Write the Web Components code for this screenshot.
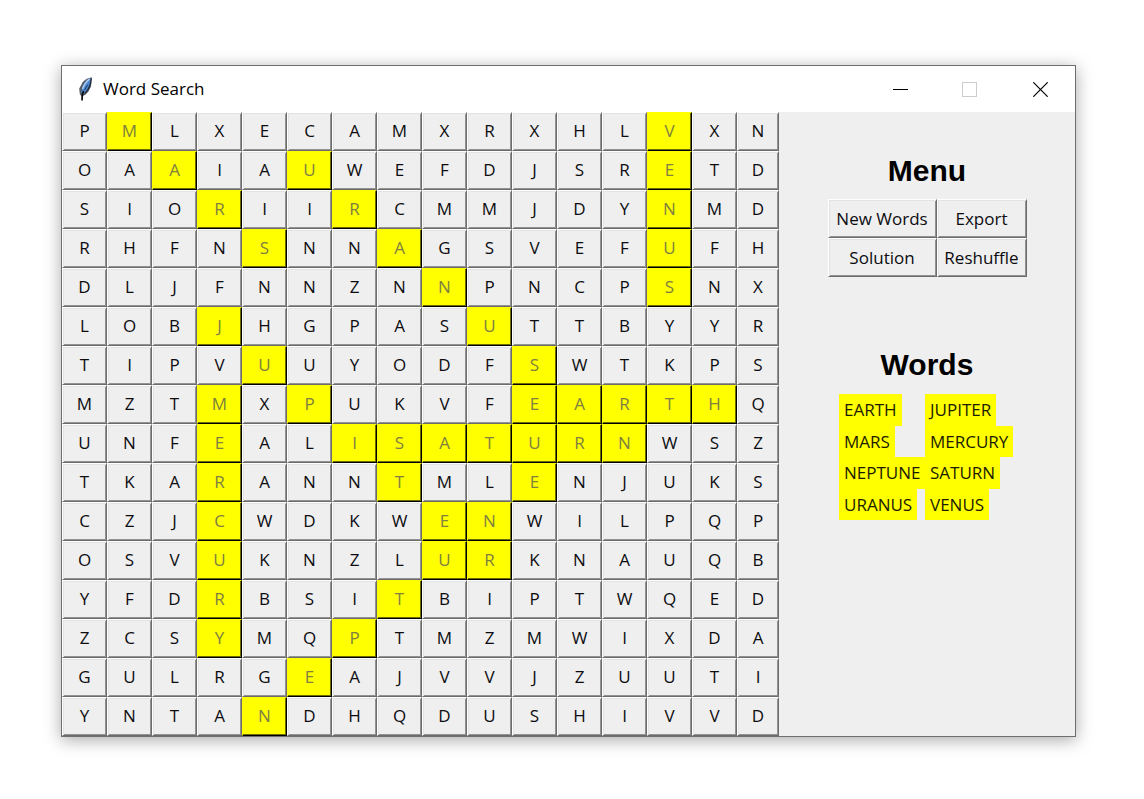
<!DOCTYPE html>
<html lang="en">
<head>
<meta charset="utf-8">
<title>Word Search</title>
<style>
  html { background: #fff; }
  body { margin: 0; padding: 65px 68px 62px 61px; font-family: "Open Sans", "Noto Sans", sans-serif; font-size: 17px; color: #000; }
</style>
</head>
<body>
<app-window heading="Word Search">
  <letter-board></letter-board>
  <side-panel>
    <menu-section></menu-section>
    <word-list></word-list>
  </side-panel>
</app-window>

<script>
const define = (name, html, setup) => {
  customElements.define(name, class extends HTMLElement {
    constructor() {
      super();
      this.attachShadow({ mode: 'open' }).innerHTML = html;
    }
    connectedCallback() { if (setup) setup(this, this.shadowRoot); }
  });
};

/* Raised Tk-style button face, shared by the board and the menu */
const bevel = `
  button { box-sizing: border-box; width: 100%; height: 39px; margin: 0; padding: 0; display: block;
    font: inherit; line-height: 35px; text-align: center; color: #0c0c10; background: #efefef;
    border: 1px solid; border-color: #fff #6c6c6c #6c6c6c #fff;
    box-shadow: inset 1px 1px #e3e3e3, inset -1px -1px #929292; border-radius: 0; white-space: nowrap; }`;

define('app-window', `
  <style>
    :host { display: block; border: 1px solid #6e6e6e; background: #efefef; box-shadow: 0 3px 16px rgba(0,0,0,.34); }
    header { display: flex; align-items: center; height: 46px; background: #fff; }
    .logo { margin-left: 15px; flex: none; }
    h1 { flex: 1; margin: 0 0 0 10px; font-size: 17px; font-weight: 400; line-height: 24px; }
    .controls { display: flex; }
    .controls button { width: 70px; height: 46px; padding: 0; border: 0; background: none; display: grid; place-items: center; }
    main { display: flex; align-items: stretch; }
  </style>
  <header>
    <svg class="logo" width="16" height="26" viewBox="0 0 16 26" aria-hidden="true">
      <path d="M15 1.200C10 2 6 4.500 4.500 8.500L2.200 12.500 2.800 18 4.500 20.500 8 19 11.500 15.500 14 10.500Z" fill="#555d66"/>
      <path d="M13.800 2.200C9.500 3.500 7 7 5.500 11L3.800 17.500 7.800 16.500C11.800 12.500 13.500 8 13.800 2.200Z" fill="#4a84cc"/>
      <path d="M12.600 3C9 5.500 7 9 5.500 13" fill="none" stroke="#a5c8ee" stroke-width="1.600"/>
      <path d="M14.200 2.500C14 8 12 13 8 17.500" fill="none" stroke="#1c2633" stroke-width="1.100"/>
      <path d="M10.500 9L7.500 14" fill="none" stroke="#1d3e6b"/>
      <path d="M6.500 15L5.300 19 5 24.500" fill="none" stroke="#0b0d11" stroke-width="1.700"/>
    </svg>
    <h1></h1>
    <div class="controls">
      <button aria-label="Minimize"><svg width="15" height="15" shape-rendering="crispEdges"><path d="M0 7.500H15" stroke="#000"/></svg></button>
      <button aria-label="Maximize" disabled><svg width="16" height="15" shape-rendering="crispEdges"><path d="M.5.5H14.500V14.500H.5Z" fill="none" stroke="#ccc"/></svg></button>
      <button aria-label="Close"><svg width="15" height="15"><path d="M.3.3L14.700 14.700M14.700.3L.3 14.700" stroke="#000" stroke-width="1.200"/></svg></button>
    </div>
  </header>
  <main><slot></slot></main>`,
  (el, root) => { root.querySelector('h1').textContent = el.getAttribute('heading'); });

define('letter-cell', `
  <style>
    :host { display: block; min-width: 0; }
    ${bevel}
    button { padding-bottom: 2px; }
    :host([found]) button { color: #808040; background: #ff0; border-color: #ff0 #000 #000 #ff0; box-shadow: inset -1px -1px #6c6c00; }
  </style>
  <button><slot></slot></button>`,
  (el, root) => { root.querySelector('button').disabled = el.hasAttribute('found'); });

/* Lower-case letters mark the cells that belong to a found word */
const rows = `
PmLXECAMXRXHLvXN
OAaIAuWEFDJSReTD
SIOrIIrCMMJDYnMD
RHFNsNNaGSVEFuFH
DLJFNNZNnPNCPsNX
LOBjHGPASuTTBYYR
TIPVuUYODFsWTKPS
MZTmXpUKVFearthQ
UNFeALisaturnWSZ
TKArANNtMLeNJUKS
CZJcWDKWenWILPQP
OSVuKNZLurKNAUQB
YFDrBSItBIPTWQED
ZCSyMQpTMZMWIXDA
GULRGeAJVVJZUUTI
YNTAnDHQDUSHIVVD`.trim().split('\n');

define('letter-board', `
  <style>
    :host { display: grid; flex: 717 1 0; grid-template-columns: repeat(15, minmax(0, 45fr)) minmax(0, 42fr); }
  </style>`,
  (el, root) => {
    for (const ch of rows.join('')) {
      const cell = document.createElement('letter-cell');
      cell.textContent = ch.toUpperCase();
      if (ch !== ch.toUpperCase()) cell.setAttribute('found', '');
      root.append(cell);
    }
  });

define('side-panel', `
  <style>
    :host { display: flex; flex: 296 1 0; flex-direction: column; align-items: center; gap: 68px; padding-top: 39px; box-sizing: border-box; }
  </style>
  <slot></slot>`);

const title = `h2 { margin: 0; font: 700 30px/40px "Liberation Sans", Arial, sans-serif; text-align: center; }`;

define('menu-section', `
  <style>
    :host { display: block; }
    ${title}
    div { display: grid; grid-template-columns: 109px 90px; margin-top: 8px; }
    ${bevel}
  </style>
  <h2>Menu</h2>
  <div><button>New Words</button><button>Export</button><button>Solution</button><button>Reshuffle</button></div>`);

define('word-list', `
  <style>
    :host { display: block; }
    ${title}
    ul { display: grid; grid-template-columns: 86px 90px; grid-template-rows: repeat(4, 1fr); height: 126px; margin: 9px 0 0; padding: 0; list-style: none; }
    li { justify-self: start; display: flex; align-items: center; padding: 0 5px; background: #ff0; color: #1c1c00; white-space: nowrap; }
  </style>
  <h2>Words</h2>
  <ul><li>EARTH</li><li>JUPITER</li><li>MARS</li><li>MERCURY</li><li>NEPTUNE</li><li>SATURN</li><li>URANUS</li><li>VENUS</li></ul>`);
</script>
</body>
</html>
